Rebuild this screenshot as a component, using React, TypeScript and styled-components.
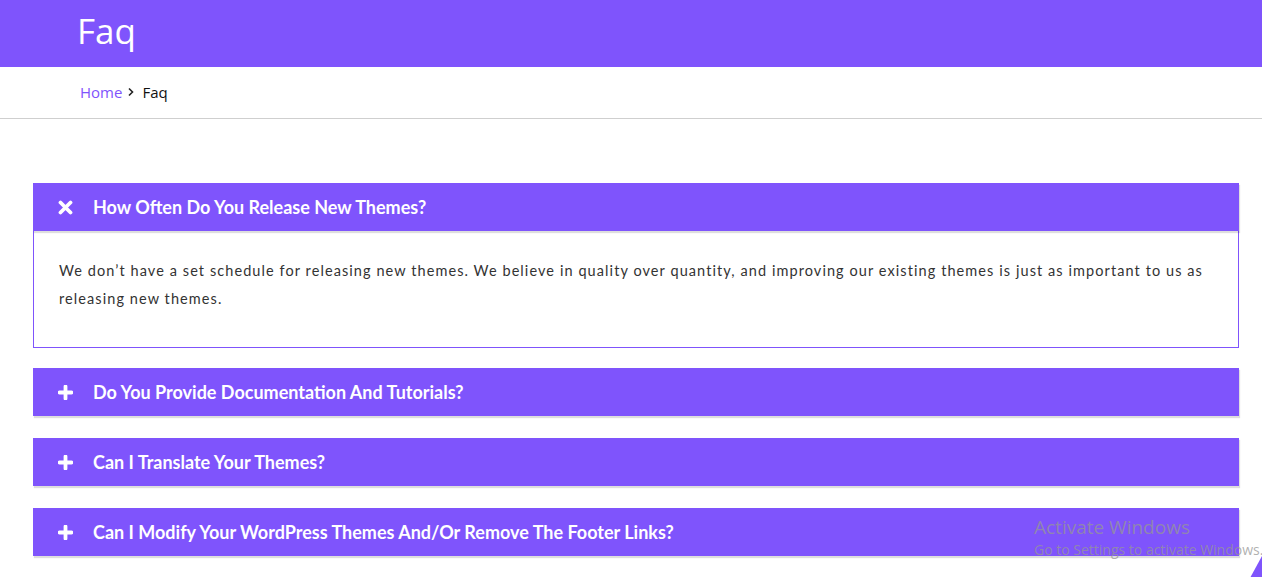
import React from "react";
import styled, { createGlobalStyle } from "styled-components";

const PURPLE = "#7f54fc";

const Global = createGlobalStyle`
  html, body { margin: 0; padding: 0; background: #fff; }
  body { font-family: "Lato", "Open Sans", sans-serif; overflow: hidden; }
  * { box-sizing: border-box; }
`;

const Page = styled.div`
  width: 1262px;
  min-height: 577px;
  position: relative;
  overflow: hidden;
`;

const Banner = styled.header`
  height: 67px;
  background: ${PURPLE};
  padding-left: 77px;
  display: flex;
  align-items: center;
`;

const Title = styled.h1`
  margin: 0;
  margin-top: -6px;
  color: #fff;
  font-family: "Open Sans", sans-serif;
  font-weight: 400;
  font-size: 35px;
`;

const Crumbs = styled.nav`
  height: 52px;
  border-bottom: 1px solid #cfcfcf;
  display: flex;
  align-items: center;
  padding-left: 80px;
  padding-bottom: 1px;
  font-family: "Open Sans", sans-serif;
  font-size: 15px;
`;

const CrumbLink = styled.a`
  color: ${PURPLE};
  text-decoration: none;
`;

const CrumbSep = styled.span`
  display: inline-flex;
  margin: 0 7px 0 5px;
  color: #222;
`;

const CrumbCurrent = styled.span`
  color: #111;
`;

const Accordion = styled.section`
  margin: 64px 0 0 33px;
  width: 1206px;
  display: flex;
  flex-direction: column;
`;

const Item = styled.div<{ $open?: boolean }>`
  margin-bottom: ${(p) => (p.$open ? "20px" : "22px")};
`;

const Head = styled.div`
  height: 48px;
  background: ${PURPLE};
  display: flex;
  align-items: center;
  padding-left: 25px;
  box-shadow: 1px 2px 1px rgba(0, 0, 0, 0.13);
  position: relative;
`;

const IconBox = styled.span`
  width: 15px;
  height: 15px;
  display: inline-flex;
  margin-right: 20px;
`;

const Question = styled.h3`
  margin: 0;
  color: #fff;
  font-family: "Lato", sans-serif;
  font-weight: 700;
  font-size: 18px;
  letter-spacing: 0;
`;

const Body = styled.div`
  border: 1px solid ${PURPLE};
  border-top: none;
  padding: 26px 25px 34px;
`;

const Answer = styled.p`
  margin: 0;
  color: #333;
  font-family: "Lato", sans-serif;
  font-size: 14.5px;
  letter-spacing: 1.08px;
  line-height: 28px;
`;

const Watermark = styled.div`
  position: absolute;
  left: 1034px;
  top: 515px;
  color: rgba(150, 150, 150, 0.75);
  font-family: "Open Sans", sans-serif;
  white-space: nowrap;
  pointer-events: none;
`;

const WmTitle = styled.div`
  font-size: 19px;
  line-height: 24px;
`;

const WmSub = styled.div`
  font-size: 14px;
  line-height: 22px;
`;

const Corner = styled.svg`
  position: absolute;
  right: 0;
  bottom: 0;
`;

const CloseIcon = () => (
  <svg width="15" height="15" viewBox="0 0 15 15">
    <path d="M2.5 2.5 L12.5 12.5 M12.5 2.5 L2.5 12.5" stroke="#fff" strokeWidth="3.8" strokeLinecap="round" />
  </svg>
);

const PlusIcon = () => (
  <svg width="15" height="15" viewBox="0 0 15 15">
    <path d="M7.5 1.5 V13.5 M1.5 7.5 H13.5" stroke="#fff" strokeWidth="3.8" strokeLinecap="round" />
  </svg>
);

const Chevron = () => (
  <svg width="8" height="10" viewBox="0 0 8 10">
    <path d="M2 1.5 L5.5 5 L2 8.5" fill="none" stroke="#222" strokeWidth="1.6" />
  </svg>
);

const faqs = [
  {
    q: "How Often Do You Release New Themes?",
    a: "We don’t have a set schedule for releasing new themes. We believe in quality over quantity, and improving our existing themes is just as important to us as releasing new themes.",
    open: true,
  },
  { q: "Do You Provide Documentation And Tutorials?" },
  { q: "Can I Translate Your Themes?" },
  { q: "Can I Modify Your WordPress Themes And/Or Remove The Footer Links?" },
];

export default function App() {
  return (
    <Page>
      <Global />
      <Banner>
        <Title>Faq</Title>
      </Banner>
      <Crumbs>
        <CrumbLink href="#">Home</CrumbLink>
        <CrumbSep>
          <Chevron />
        </CrumbSep>
        <CrumbCurrent>Faq</CrumbCurrent>
      </Crumbs>
      <Accordion>
        {faqs.map((f) => (
          <Item key={f.q} $open={!!f.open}>
            <Head>
              <IconBox>{f.open ? <CloseIcon /> : <PlusIcon />}</IconBox>
              <Question>{f.q}</Question>
            </Head>
            {f.open && (
              <Body>
                <Answer>{f.a}</Answer>
              </Body>
            )}
          </Item>
        ))}
      </Accordion>
      <Watermark>
        <WmTitle>Activate Windows</WmTitle>
        <WmSub>Go to Settings to activate Windows.</WmSub>
      </Watermark>
      <Corner width="12" height="22" viewBox="0 0 12 22">
        <path d="M12 0 L12 22 L0 22 Z" fill={PURPLE} />
      </Corner>
    </Page>
  );
}
